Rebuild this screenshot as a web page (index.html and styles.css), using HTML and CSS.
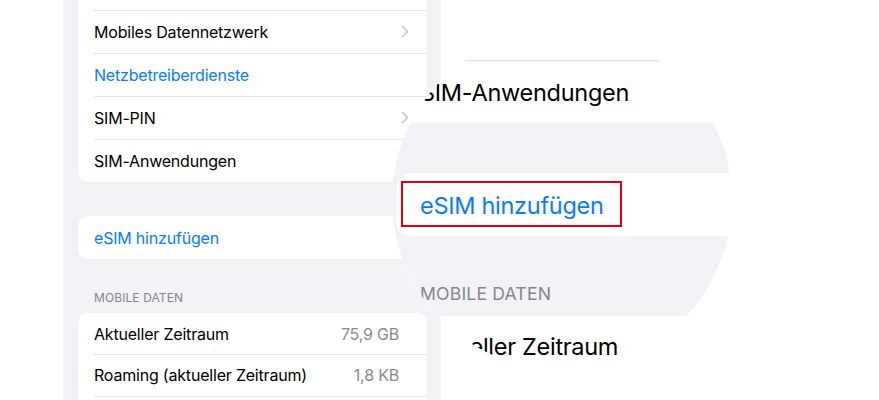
FILE: index.html
```html
<!DOCTYPE html>
<html lang="de">
<head>
<meta charset="utf-8">
<title>Mobilfunk</title>
<link rel="stylesheet" href="styles.css">
</head>
<body>
<div class="page">
  <div class="phone">
    <div class="card card-top">
      <div class="row sep"><span class="label">Mobiles Datennetzwerk</span><svg class="chev" viewBox="0 0 8 13"><path d="M1.5 1.5 L6.5 6.5 L1.5 11.5"/></svg></div>
      <div class="row sep"><span class="label link">Netzbetreiberdienste</span></div>
      <div class="row sep"><span class="label">SIM-PIN</span><svg class="chev" viewBox="0 0 8 13"><path d="M1.5 1.5 L6.5 6.5 L1.5 11.5"/></svg></div>
      <div class="row sep"><span class="label">SIM-Anwendungen</span></div>
    </div>
    <div class="card card-single">
      <div class="row"><span class="label link">eSIM hinzufügen</span></div>
    </div>
    <div class="section-head">MOBILE DATEN</div>
    <div class="card card-data">
      <div class="row drow"><span class="label">Aktueller Zeitraum</span><span class="value">75,9 GB</span></div>
      <div class="row drow sep"><span class="label">Roaming (aktueller Zeitraum)</span><span class="value">1,8 KB</span></div>
      <div class="row drow sep"></div>
    </div>
  </div>

  <div class="magnifier" aria-hidden="true">
    <div class="zoom-content">
      <div class="phone">
        <div class="card card-top">
          <div class="row sep"></div>
          <div class="row sep"></div>
          <div class="row sep"></div>
          <div class="row sep"><span class="label">SIM-Anwendungen</span></div>
        </div>
        <div class="card card-single">
          <div class="row"><span class="label link">eSIM hinzufügen</span></div>
        </div>
        <div class="section-head">MOBILE DATEN</div>
        <div class="card card-data">
          <div class="row drow"><span class="label">Aktueller Zeitraum</span></div>
          <div class="row drow sep"></div>
          <div class="row drow sep"></div>
        </div>
      </div>
    </div>
  </div>
  <div class="highlight"></div>
</div>
</body>
</html>
```
FILE: styles.css
```css
* { box-sizing: border-box; }
html, body { margin: 0; padding: 0; background: #fff; }
body {
  width: 879px;
  height: 400px;
  overflow: hidden;
  font-family: Inter, "Noto Sans", sans-serif;
  color: #000;
}
.page {
  position: relative;
  width: 879px;
  height: 400px;
  display: flex;
  overflow: hidden;
}
.phone {
  margin-left: 63px;
  width: 378px;
  height: 400px;
  background: #f2f2f7;
  padding: 0 14px 0 15px;
  display: flex;
  flex-direction: column;
  overflow: hidden;
  flex-shrink: 0;
}
.phone > * { flex-shrink: 0; }
.card {
  background: #fff;
  border-radius: 10px;
}
.card-top {
  border-radius: 0 0 10px 10px;
  padding-top: 10px;
}
.row {
  height: 43px;
  display: flex;
  align-items: center;
  padding: 0 18px 0 16px;
  position: relative;
  font-size: 16px;
  letter-spacing: -0.2px;
}
.row.sep::before {
  content: "";
  position: absolute;
  left: 16px;
  right: 0;
  top: 0;
  height: 1px;
  background: #e4e4e7;
}
.label { flex: 1; white-space: nowrap; }
.link { color: #0a7aff; }
.chev {
  width: 8px;
  height: 13px;
  fill: none;
  stroke: #c4c4c7;
  stroke-width: 1.5;
  stroke-linecap: round;
  stroke-linejoin: round;
}
.card-single { margin-top: 34px; }
.section-head {
  height: 54px;
  padding: 31px 16px 0;
  font-size: 12px;
  line-height: 16px;
  color: #86868b;
  letter-spacing: 0.1px;
}
.drow { height: 41px; padding-right: 28px; }
.drow.sep { height: 42px; }
.value { color: #8a8a8e; }

.magnifier {
  position: absolute;
  left: 392px;
  top: 30px;
  width: 340px;
  height: 340px;
  border-radius: 50%;
  overflow: hidden;
  background: #fff;
}
.zoom-content {
  width: 879px;
  height: 400px;
  display: flex;
  transform-origin: 0 0;
  transform: translate(-110.2px, -174.4px) scale(1.47);
}
.highlight {
  position: absolute;
  left: 401px;
  top: 181px;
  width: 221px;
  height: 46px;
  border: 2px solid #e1000f;
}
```
